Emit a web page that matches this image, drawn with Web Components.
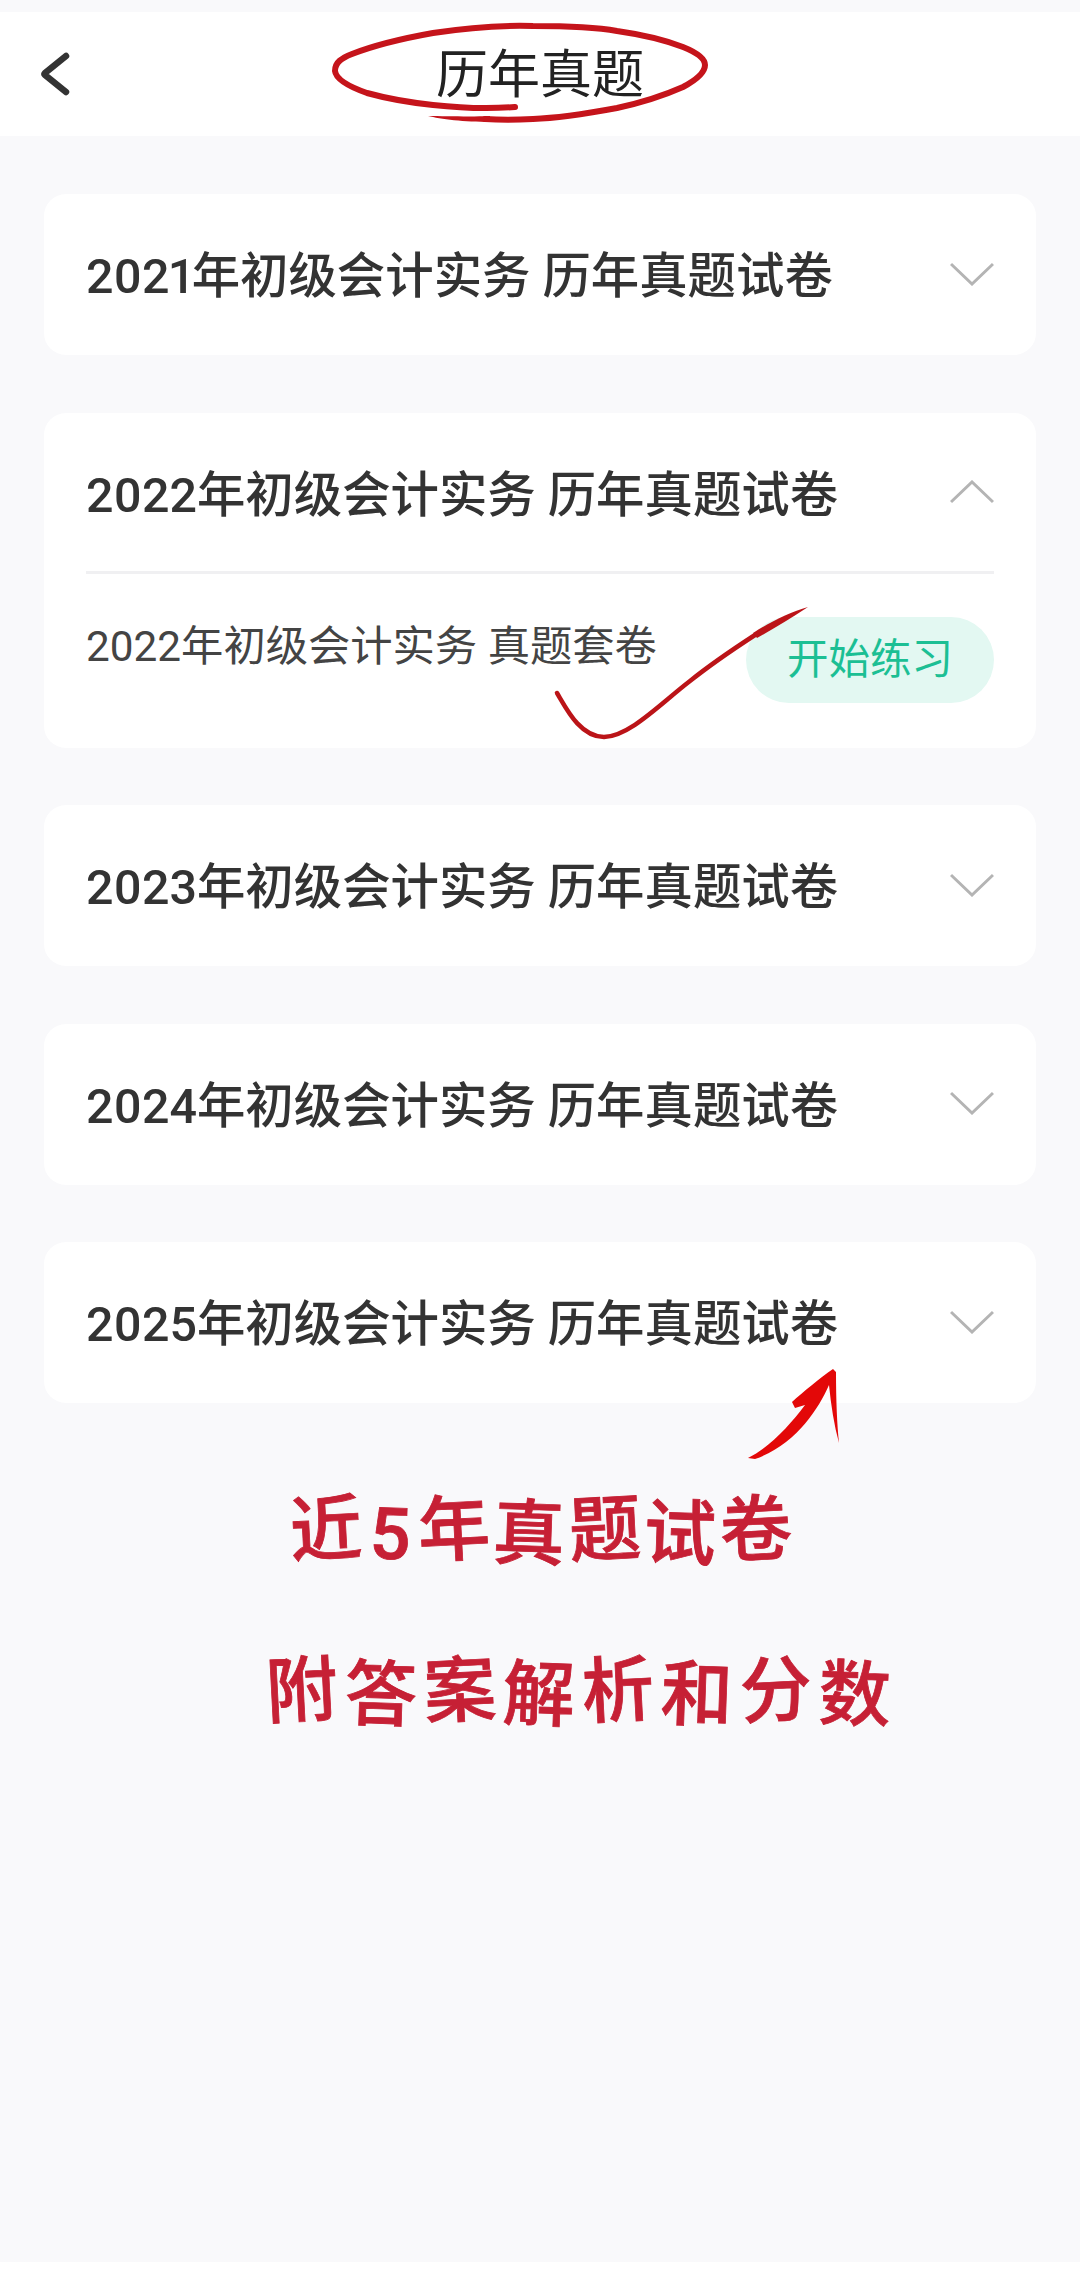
<!DOCTYPE html>
<html lang="zh">
<head>
<meta charset="utf-8">
<title>历年真题</title>
<style>
    html, body { margin: 0; height: 100%; background: #f9f9fb; }
    body { font-family: Roboto, "Noto Sans CJK SC", sans-serif; }
</style>
</head>
<body>
<exam-page>
    <app-bar title="历年真题"></app-bar>
    <exam-list>
        <exam-card title="2021年初级会计实务 历年真题试卷"></exam-card>
        <exam-card title="2022年初级会计实务 历年真题试卷" open>
            <exam-paper name="2022年初级会计实务 真题套卷" action="开始练习"></exam-paper>
        </exam-card>
        <exam-card title="2023年初级会计实务 历年真题试卷"></exam-card>
        <exam-card title="2024年初级会计实务 历年真题试卷"></exam-card>
        <exam-card title="2025年初级会计实务 历年真题试卷"></exam-card>
    </exam-list>
    <ink-notes></ink-notes>
</exam-page>

<script>
const CJK = `Roboto, "Noto Sans CJK SC", sans-serif`;

class ExamPage extends HTMLElement {
    constructor() {
        super();
        this.attachShadow({ mode: "open" });
        this.shadowRoot.innerHTML = `
        <style>
            :host {
                display: block;
                position: relative;
                height: 2270px;
                overflow: hidden;
                padding-top: 12px;
                box-sizing: border-box;
                border-bottom: 8px solid #fff;
            }
        </style>
        <slot></slot>`;
    }
}

class AppBar extends HTMLElement {
    constructor() {
        super();
        this.attachShadow({ mode: "open" });
    }
    connectedCallback() {
        this.shadowRoot.innerHTML = `
        <style>
            :host {
                display: flex;
                align-items: center;
                justify-content: center;
                position: relative;
                height: 124px;
                background: #fff;
            }
            .title {
                font: 400 52px/1 ${CJK};
                color: #222;
                margin-top: 4px;
            }
            svg {
                position: absolute;
                left: 36px;
                top: 36px;
            }
        </style>
        <svg width="40" height="54" viewBox="0 0 40 54" fill="none">
            <path d="M30 8 L9 25 Q8 26 9 27 L30 44" stroke="#333" stroke-width="6.5" stroke-linecap="round" stroke-linejoin="round"/>
        </svg>
        <div class="title">${this.getAttribute("title")}</div>`;
    }
}

class ExamList extends HTMLElement {
    constructor() {
        super();
        this.attachShadow({ mode: "open" });
        this.shadowRoot.innerHTML = `
        <style>
            :host {
                display: flex;
                flex-direction: column;
                gap: 57.5px;
                padding: 58px 44px 0;
            }
        </style>
        <slot></slot>`;
    }
}

class ExamCard extends HTMLElement {
    constructor() {
        super();
        this.attachShadow({ mode: "open" });
    }
    connectedCallback() {
        const open = this.hasAttribute("open");
        const arrow = open ? "M1 22 L22 2 L43 22" : "M1 2 L22 22 L43 2";
        this.shadowRoot.innerHTML = `
        <style>
            :host {
                display: block;
                background: #fff;
                border-radius: 22px;
                padding: 0 42px;
            }
            .head {
                display: flex;
                align-items: center;
                justify-content: space-between;
                height: 161px;
            }
            .title {
                font: 500 48.4px/1 ${CJK};
                font-variant-numeric: proportional-nums;
                color: #333;
                margin-top: 6px;
            }
            svg { margin-top: -2px; }
            .body {
                border-top: 3px solid #f0f0f2;
                margin-top: -3px;
            }
        </style>
        <div class="head">
            <div class="title">${this.getAttribute("title")}</div>
            <svg width="44" height="24" viewBox="0 0 44 24" fill="none">
                <path d="${arrow}" stroke="#b4b4b4" stroke-width="3"/>
            </svg>
        </div>
        ${open ? `<div class="body"><slot></slot></div>` : ""}`;
    }
}

class ExamPaper extends HTMLElement {
    constructor() {
        super();
        this.attachShadow({ mode: "open" });
    }
    connectedCallback() {
        this.shadowRoot.innerHTML = `
        <style>
            :host {
                display: flex;
                justify-content: space-between;
                align-items: flex-start;
                height: 174px;
                padding-top: 43px;
                box-sizing: border-box;
            }
            .name {
                font: 400 42.3px/1 ${CJK};
                color: #444;
                margin-top: 9px;
            }
            .btn {
                width: 248px;
                height: 86px;
                border-radius: 43px;
                background: #e3f8f2;
                color: #1cbf94;
                font: 400 41.5px/86px ${CJK};
                text-align: center;
            }
        </style>
        <div class="name">${this.getAttribute("name")}</div>
        <div class="btn">${this.getAttribute("action")}</div>`;
    }
}

// hand drawn marks that sit over the page
class InkNotes extends HTMLElement {
    constructor() {
        super();
        this.attachShadow({ mode: "open" });
        this.shadowRoot.innerHTML = `
        <style>
            :host {
                position: absolute;
                inset: 0;
                display: block;
                pointer-events: none;
            }
            svg {
                position: absolute;
                left: 0;
                top: 0;
            }
            .note {
                position: absolute;
                color: #c62035;
                font: 500 72px/1 ${CJK};
                -webkit-text-stroke: 0.8px #c62035;
                white-space: nowrap;
                display: flex;
            }
            .note span { display: block; }
            .note span:nth-child(odd) { transform: rotate(-3deg) translateY(-2px); }
            .note span:nth-child(even) { transform: rotate(2deg) translateY(2px); }
            .one { left: 290px; top: 1497px; gap: 3.5px; }
            .one .num { margin: 0 4px; }
            .two { left: 266px; top: 1658px; gap: 7px; }
        </style>
        <svg width="1080" height="2270" fill="none">
            <path d="M515 107 C490 109 460 108 433 105 C405 102 385 98 367 93 C350 87 336 80 335 71 C335 62 342 58 352 54 C375 45 405 38 433 33 C465 28 500 25 533 26 C565 26 595 27 617 31 C645 35 665 40 683 47 C698 53 705 59 705 65 C705 72 698 79 683 87 C665 95 640 103 617 108 C590 113 560 118 533 119 C515 120 500 120 485 119"
                stroke="#c5141b" stroke-width="6" stroke-linecap="round"/>
            <path d="M490 116 C470 117 445 116 428 116 C440 119 465 122 490 122 Z" fill="#c5141b"/>
            <path d="M557 693 C566 708 580 737 604 737 C630 736 660 704 690 681 C710 665 735 648 755 635" stroke="#bb1418" stroke-width="4.5" stroke-linecap="round"/>
            <path d="M753 633 C770 622 790 612 808 607 C790 619 773 629 757 638 Z" fill="#bb1418"/>
            <path d="M833 1369 L836 1372 C836 1400 837 1425 839 1443 C834 1425 831 1405 829 1385 C818 1410 795 1445 755 1459 L748 1458 C770 1447 790 1425 805 1405 L795 1408 L792 1402 C803 1392 820 1378 833 1369 Z" fill="#e30808"/>
        </svg>
        <div class="note one"><span>近</span><span class="num">5</span><span>年</span><span>真</span><span>题</span><span>试</span><span>卷</span></div>
        <div class="note two"><span>附</span><span>答</span><span>案</span><span>解</span><span>析</span><span>和</span><span>分</span><span>数</span></div>`;
    }
}

customElements.define("exam-page", ExamPage);
customElements.define("app-bar", AppBar);
customElements.define("exam-list", ExamList);
customElements.define("exam-card", ExamCard);
customElements.define("exam-paper", ExamPaper);
customElements.define("ink-notes", InkNotes);
</script>
</body>
</html>
